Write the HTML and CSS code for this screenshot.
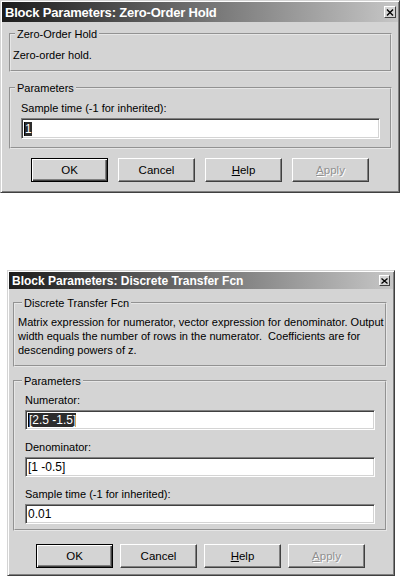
FILE: index.html
```html
<!DOCTYPE html>
<html lang="en">
<head>
    <meta charset="UTF-8">
    <meta name="viewport" content="width=device-width, initial-scale=1.0">
    <title>Block Parameters</title>
    <link rel="stylesheet" href="styles.css">
</head>
<body>
    <div class="dialog dialog-zoh">
        <div class="titlebar">
            <span class="title">Block Parameters: Zero-Order Hold</span>
            <span class="close">
                <svg width="8" height="7" viewBox="0 0 8 7"><path d="M1 0.5L7 6.5M7 0.5L1 6.5" stroke="#000" stroke-width="1.4"/></svg>
            </span>
        </div>
        <div class="body">
            <fieldset class="group group-desc">
                <legend>Zero-Order Hold</legend>
                <div class="group-inner">Zero-order hold.</div>
            </fieldset>
            <fieldset class="group group-params">
                <legend>Parameters</legend>
                <div class="group-inner">
                    <div class="label">Sample time (-1 for inherited):</div>
                    <div class="field"><span class="sel">1</span></div>
                </div>
            </fieldset>
            <div class="buttons">
                <button class="btn btn-default">OK</button>
                <button class="btn">Cancel</button>
                <button class="btn"><u>H</u>elp</button>
                <button class="btn" disabled><u>A</u>pply</button>
            </div>
        </div>
    </div>

    <div class="dialog dialog-dtf">
        <div class="titlebar">
            <span class="title">Block Parameters: Discrete Transfer Fcn</span>
            <span class="close">
                <svg width="7" height="6" viewBox="0 0 7 6"><path d="M0.5 0.5L6.5 5.5M6.5 0.5L0.5 5.5" stroke="#000" stroke-width="1.3"/></svg>
            </span>
        </div>
        <div class="body">
            <fieldset class="group group-desc">
                <legend>Discrete Transfer Fcn</legend>
                <div class="group-inner">Matrix expression for numerator, vector expression for denominator. Output<br>width equals the number of rows in the numerator.&nbsp; Coefficients are for<br>descending powers of z.</div>
            </fieldset>
            <fieldset class="group group-params">
                <legend>Parameters</legend>
                <div class="group-inner">
                    <div class="label">Numerator:</div>
                    <div class="field"><span class="sel">[2.5 -1.5]</span></div>
                    <div class="label">Denominator:</div>
                    <div class="field">[1 -0.5]</div>
                    <div class="label">Sample time (-1 for inherited):</div>
                    <div class="field">0.01</div>
                </div>
            </fieldset>
            <div class="buttons">
                <button class="btn btn-default">OK</button>
                <button class="btn">Cancel</button>
                <button class="btn"><u>H</u>elp</button>
                <button class="btn" disabled><u>A</u>pply</button>
            </div>
        </div>
    </div>
</body>
</html>
```

FILE: styles.css
```css
body {
    margin: 0;
    background: #fff;
    font-family: "Liberation Sans", Arial, sans-serif;
    font-size: 11px;
    color: #000;
}

.dialog {
    box-sizing: border-box;
    background: #d4d4d4;
    border: 1px solid;
    border-color: #d4d4d4 #404040 #404040 #d4d4d4;
    box-shadow: inset 1px 1px #fff, inset -1px -1px #808080;
}

.dialog-zoh {
    width: 400px;
}

.dialog-dtf {
    width: 388px;
    margin: 77px 0 0 7px;
}

/* title bar */
.titlebar {
    display: flex;
    align-items: center;
    justify-content: space-between;
    margin: 1px;
    padding: 0 2px 0 3px;
    background: linear-gradient(to right, #1c1c1c, #c6c6c6);
    color: #fff;
    font-weight: bold;
}

.dialog-zoh .titlebar {
    height: 20px;
    font-size: 13px;
    letter-spacing: -0.2px;
}

.dialog-dtf .titlebar {
    height: 17px;
    font-size: 12px;
    padding-right: 3px;
}

.close {
    display: flex;
    align-items: center;
    justify-content: center;
    box-sizing: border-box;
    background: #d4d4d4;
    border: 1px solid;
    border-color: #fff #404040 #404040 #fff;
}

.dialog-zoh .close {
    width: 12px;
    height: 12px;
}

.dialog-dtf .close {
    width: 11px;
    height: 11px;
}

/* group boxes */
.group {
    margin: 0;
    padding: 0;
    border: 2px groove #e6e6e6;
    min-width: 0;
}

.group legend {
    padding: 0 2px;
    margin-left: 4px;
    line-height: 14px;
}

.dialog-zoh .body {
    padding: 4px 7px 10px 8px;
}

.dialog-dtf .body {
    padding: 6px 7px 7px 5px;
}

.dialog-zoh .group-desc .group-inner {
    padding: 7px 2px 8px;
    line-height: 14px;
}

.dialog-zoh .group-params {
    margin-top: 9px;
}

.dialog-zoh .group-params .group-inner {
    padding: 6px 10px 8px;
}

.dialog-zoh .label {
    line-height: 14px;
}

.dialog-zoh .field {
    margin-top: 3px;
    height: 21px;
}

.dialog-dtf .group legend {
    margin-left: 7px;
}

.dialog-dtf .group-desc .group-inner {
    padding: 5px 3px 8px;
    line-height: 14px;
    white-space: nowrap;
}

.dialog-dtf .group-params {
    margin-top: 7px;
}

.dialog-dtf .group-params .group-inner {
    padding: 5px 10px 5px;
}

.dialog-dtf .label {
    line-height: 14px;
}

.dialog-dtf .field {
    margin: 3px 0 10px;
    height: 20px;
}

.dialog-dtf .field:last-child {
    margin-bottom: 0;
}

/* sunken edit fields */
.field {
    box-sizing: border-box;
    display: flex;
    align-items: center;
    padding-left: 2px;
    background: #fff;
    border: 1px solid;
    border-color: #808080 #fff #fff #808080;
    box-shadow: inset 1px 1px #404040, inset -1px -1px #d4d4d4;
    font-size: 12px;
}

.sel {
    background: #2c2c2c;
    color: #fff;
    line-height: 14px;
    border-left: 1px solid #000;
}

/* push buttons */
.buttons {
    display: flex;
}

.dialog-zoh .buttons {
    gap: 10px;
    margin: 9px 0 0 22px;
}

.dialog-dtf .buttons {
    gap: 7px;
    margin: 13px 0 0 23px;
}

.btn {
    box-sizing: border-box;
    width: 77px;
    height: 24px;
    padding: 0;
    background: #d4d4d4;
    border: 1px solid;
    border-color: #fff #404040 #404040 #fff;
    box-shadow: inset -1px -1px #808080;
    font-family: "Liberation Sans", Arial, sans-serif;
    font-size: 11.5px;
    color: #000;
}

.btn u {
    text-decoration-thickness: 1px;
}

.btn-default {
    border-color: #000;
    box-shadow: inset 1px 1px #fff, inset -1px -1px #404040, inset -2px -2px #808080;
}

.btn:disabled {
    color: #909090;
    text-shadow: 1px 1px #fff;
}
```
